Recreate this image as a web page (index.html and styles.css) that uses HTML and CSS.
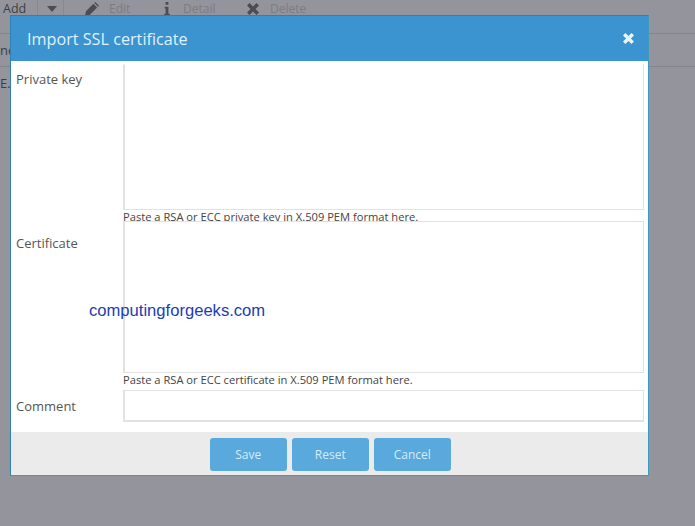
FILE: index.html
```html
<!DOCTYPE html>
<html lang="en">
<head>
<meta charset="utf-8">
<title>Import SSL certificate</title>
<link rel="stylesheet" href="styles.css">
</head>
<body>
<div class="toolbar">
  <span class="tool tool-add">Add</span>
  <span class="tool tool-caret"><svg width="12" height="6" viewBox="0 0 12 6"><path class="ico" d="M1 0h10L6 6z"/></svg></span>
  <span class="tool tool-edit"><svg width="14" height="14" viewBox="0 0 15 15"><path class="ico" d="M0 15l1-5 8-8 4 4-8 8zM10 1l1-1 4 4-1 1z"/></svg><span>Edit</span></span>
  <span class="tool tool-detail"><svg width="6" height="14" viewBox="0 0 6 15"><path class="ico" d="M1.500 0h3v3h-3zM.5 5h4v7.500h1.500V15H0v-2.500h1.500V7H.5z"/></svg><span>Detail</span></span>
  <span class="tool tool-delete"><svg width="12" height="12" viewBox="0 0 12 12"><path class="ico" d="M0 2.500 2.500 0 6 3.500 9.500 0 12 2.500 8.500 6 12 9.500 9.500 12 6 8.500 2.500 12 0 9.500 3.500 6z"/></svg><span>Delete</span></span>
</div>
<div class="behind-row"><span class="behind-a">ne</span></div>
<div class="behind-row behind-plain"><span class="behind-b">E.</span></div>

<section class="dialog">
  <header class="dialog-head">
    <h1 class="dialog-title">Import SSL certificate</h1>
    <svg class="close" width="11" height="11" viewBox="0 0 12 12"><path d="M0 2.600 2.600 0 6 3.400 9.400 0 12 2.600 8.600 6 12 9.400 9.400 12 6 8.600 2.600 12 0 9.400 3.400 6z"/></svg>
  </header>
  <div class="dialog-body">
    <div class="row row-key">
      <label class="label">Private key</label>
      <div class="field">
        <div class="area area-key"></div>
        <div class="hint">Paste a RSA or ECC private key in X.509 PEM format here.</div>
      </div>
    </div>
    <div class="row row-cert">
      <label class="label">Certificate</label>
      <div class="field">
        <div class="area area-cert"></div>
        <div class="hint">Paste a RSA or ECC certificate in X.509 PEM format here.</div>
      </div>
    </div>
    <div class="row row-comment">
      <label class="label">Comment</label>
      <div class="field"><div class="area area-comment"></div></div>
    </div>
  </div>
  <footer class="dialog-foot">
    <button class="btn btn-save">Save</button>
    <button class="btn btn-reset">Reset</button>
    <button class="btn btn-cancel">Cancel</button>
  </footer>
</section>
<div class="watermark">computingforgeeks.com</div>
</body>
</html>
```

FILE: styles.css
```css
* { box-sizing: border-box; }
html, body { margin: 0; height: 100%; }
body {
  width: 695px;
  height: 526px;
  overflow: hidden;
  position: relative;
  background: #94949c;
  font-family: "Open Sans", sans-serif;
  color: #4a4a4a;
}
.toolbar {
  height: 34px;
  display: flex;
  align-items: flex-start;
  border-bottom: 1px solid #84848a;
  font-size: 12px;
  line-height: 18px;
}
.tool { display: flex; align-items: center; height: 17px; color: #7c7c84; }
.tool-add { width: 38px; padding-left: 3px; color: #3e3e44; border-right: 1px solid #88888e; font-size: 12.500px; }
.tool-caret { width: 26px; padding-left: 8px; border-right: 1px solid #88888e; }
.tool-edit { width: 100px; padding-left: 21px; gap: 10px; }
.tool-detail { width: 83px; gap: 13px; }
.tool-delete { gap: 11px; }
.ico { fill: #4c4c52; }
.behind-row {
  height: 33px;
  border-bottom: 1px solid #84848a;
  font-size: 13px;
  line-height: 33px;
  color: #3e3e44;
}
.behind-plain { border-bottom: 0; }
.dialog {
  position: absolute;
  left: 10px;
  top: 15px;
  width: 639px;
  height: 461px;
  display: flex;
  flex-direction: column;
  background: #fff;
  border: 1px solid #2f80b8;
  border-bottom-color: #3f9ac0;
  border-right-color: #3f9ac0;
}
.dialog-head {
  flex: none;
  height: 45px;
  display: flex;
  align-items: center;
  justify-content: space-between;
  padding: 0 14px 0 16px;
  background: #3b94d0;
}
.dialog-title {
  margin: 0;
  font-size: 16.200px;
  font-weight: 400;
  color: #dff1fb;
}
.close { fill: #e6f5fd; margin-bottom: 1px; }
.dialog-body { flex: 1; overflow: hidden; padding-top: 3px; }
.row { display: flex; overflow: hidden; }
.row-key { height: 157px; }
.row-cert { height: 169px; }
.row-comment { height: 32px; }
.label { flex: none; width: 112px; padding-left: 5px; font-size: 13px; line-height: 18px; color: #555; }
.row-key .label { margin-top: 6px; }
.row-cert .label { margin-top: 13px; }
.row-comment .label { margin-top: 7px; }
.field { width: 521px; }
.area { background: #fff; border: 1px solid #e2e2e2; border-left-width: 2px; }
.area-key { height: 146px; border-top-color: #fff; }
.area-cert { height: 152px; }
.area-comment { height: 32px; border-bottom-width: 2px; }
.hint { font-size: 11.150px; line-height: 14px; color: #444; white-space: nowrap; }
.dialog-foot {
  flex: none;
  height: 43px;
  display: flex;
  gap: 5.500px;
  padding: 6px 0 0 199px;
  background: #ebebeb;
}
.btn {
  width: 76.500px;
  height: 33px;
  margin: 0;
  padding: 0;
  border: 0;
  border-radius: 3px;
  background: #5aa9dc;
  color: #d4ecf8;
  font-family: "Open Sans", sans-serif;
  font-size: 12px;
}
.watermark {
  position: absolute;
  left: 89px;
  top: 301px;
  font-family: "Liberation Sans", sans-serif;
  font-size: 16.600px;
  line-height: 20px;
  color: #1c3cb4;
}
```
